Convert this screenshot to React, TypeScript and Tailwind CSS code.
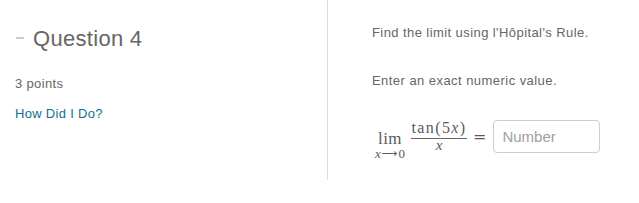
import React from "react";

const QuestionPanel = () => {
  return (
    <div className="w-[328px] h-[180px] shrink-0 border-r border-[#dddddd] pl-[15px]">
      {/* Title */}
      <div className="flex items-start mt-[26px]">
        <span className="mt-[11px] ml-[1px] mr-[9px] w-[8px] h-[2px] bg-[#cccccc]" />
        <h2 className="text-[22px] leading-[25px] tracking-[0.3px] text-[#666666]">Question 4</h2>
      </div>
      <p className="mt-[25px] text-[13px] leading-[15px] tracking-[0.35px] text-[#666666]">3 points</p>
      <a
        href="#"
        className="block mt-[15px] text-[13px] leading-[15px] tracking-[0.3px] text-[#11718d]"
      >
        How Did I Do?
      </a>
    </div>
  );
};

const LimitExpression = () => {
  return (
    <div className="flex items-start font-['Liberation_Serif',serif] text-[#5a5a5a]">
      {/* lim with subscript */}
      <div className="flex flex-col items-center mt-[11px] w-[36px]">
        <span className="text-[17px] leading-[16px] tracking-[0.5px]">lim</span>
        <span className="mt-[1px] text-[13px] leading-[12px] whitespace-nowrap flex items-center">
          <i>x</i>
          <span className="font-['DejaVu_Sans',sans-serif] text-[11px] mx-[1px]">⟶</span>
          0
        </span>
      </div>
      {/* fraction */}
      <div className="flex flex-col items-center ml-[3px] w-[56px]">
        <span className="text-[16px] leading-[16px] tracking-[1.4px] whitespace-nowrap">
          tan(5<i>x</i>)
        </span>
        <span className="mt-[2px] w-full h-[1px] bg-[#666666]" />
        <span className="text-[15px] leading-[10px] mt-[1px]">
          <i>x</i>
        </span>
      </div>
      <span className="ml-[6px] mt-[9px] font-['DejaVu_Sans',sans-serif] text-[16px] leading-[16px]">
        =
      </span>
    </div>
  );
};

const AnswerPanel = () => {
  return (
    <div className="pl-[44px]">
      <p className="mt-[25px] text-[13px] leading-[15px] tracking-[0.42px] text-[#666666]">
        Find the limit using l'Hôpital's Rule.
      </p>
      <p className="mt-[33px] text-[13px] leading-[15px] tracking-[0.45px] text-[#666666]">
        Enter an exact numeric value.
      </p>
      <div className="flex items-start mt-[32px]">
        <LimitExpression />
        <input
          type="text"
          placeholder="Number"
          className="ml-[7px] w-[107px] h-[33px] rounded-[4px] border border-[#cccccc] px-[8px] text-[15px] text-[#555555] placeholder:text-[#a0a0a0] outline-none"
        />
      </div>
    </div>
  );
};

export default function App() {
  return (
    <div className="flex w-[639px] h-[203px] bg-white font-['Liberation_Sans',Arial,sans-serif]">
      <QuestionPanel />
      <AnswerPanel />
    </div>
  );
}
